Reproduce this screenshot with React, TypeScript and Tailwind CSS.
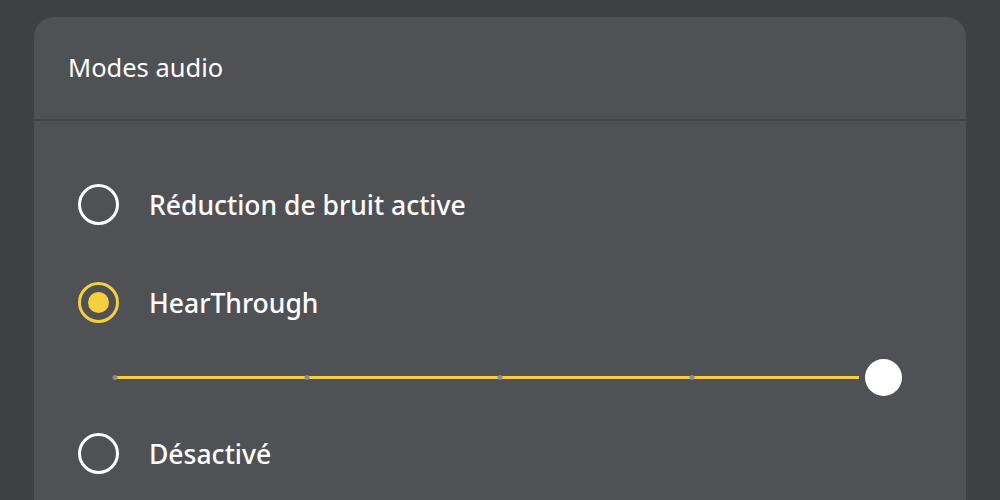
import React from "react";

const font = { fontFamily: '"Noto Sans", "Open Sans", sans-serif' };

function Radio({ checked }: { checked?: boolean }) {
  return checked ? (
    <div className="flex h-[41px] w-[41px] items-center justify-center rounded-full border-[3px] border-[#f5cf3f]">
      <div className="h-[21px] w-[21px] rounded-full bg-[#f5cf3f]" />
    </div>
  ) : (
    <div className="h-[41px] w-[41px] rounded-full border-[3px] border-white" />
  );
}

function Row({ label, checked }: { label: string; checked?: boolean }) {
  return (
    <div className="flex items-center gap-[30px] pl-[44px]">
      <Radio checked={checked} />
      <span className="text-[26.5px] leading-[36px] font-medium text-white">{label}</span>
    </div>
  );
}

export default function App() {
  const ticks = [0, 1, 2, 3];
  return (
    <div className="h-[500px] w-[1000px] overflow-hidden bg-[#3f4044] px-[34px] pt-[17px]" style={font}>
      <div className="h-[520px] rounded-[20px] bg-[#505155]">
        <div className="flex h-[104px] items-center border-b-2 border-[#444549] pl-[34px] pb-[1px]">
          <span className="text-[25.5px] text-white">Modes audio</span>
        </div>
        <div className="flex flex-col pt-[63px]">
          <Row label="Réduction de bruit active" />
          <div className="mt-[57px]">
            <Row label="HearThrough" checked />
          </div>
          <div className="mt-[36px] flex items-center pl-[81px] pr-[64px]">
            <div className="relative h-[3px] flex-1 bg-[#f5cf3f]">
              {ticks.map((i) => (
                <div
                  key={i}
                  className="absolute top-[-1px] h-[5px] w-[5px] -translate-x-1/2 rounded-full bg-[#8c8c88]"
                  style={{ left: `${i * 192.3}px` }}
                />
              ))}
            </div>
            <div className="ml-[6px] h-[37px] w-[37px] rounded-full bg-white" />
          </div>
          <div className="mt-[37px]">
            <Row label="Désactivé" />
          </div>
        </div>
      </div>
    </div>
  );
}
